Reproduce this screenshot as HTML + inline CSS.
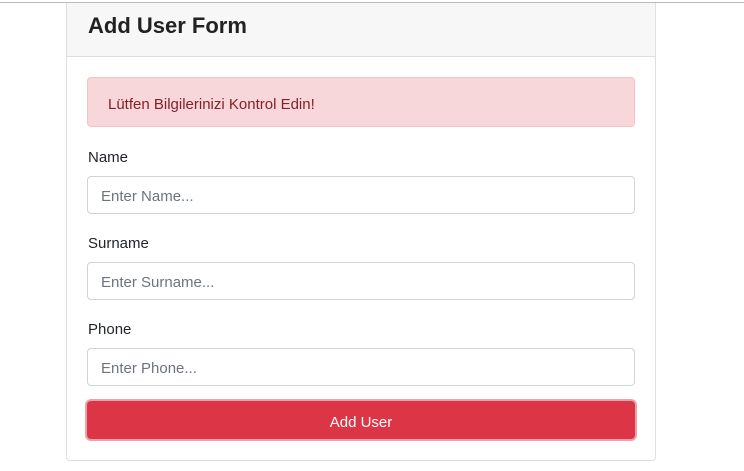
<!DOCTYPE html><html><head><style>
body{margin:0;width:744px;height:471px;background:#fff;font-family:"Liberation Sans",sans-serif;position:relative;overflow:hidden;color:#212529}
.top{position:absolute;left:0;top:2px;width:744px;height:1px;background:#bbb}
.card{position:absolute;left:66px;top:3px;width:588px;height:457px;border:1px solid #dfdfdf;border-top:none;border-radius:0 0 4px 4px}
.hd{height:53px;background:#f7f7f7;border-bottom:1px solid #dfdfdf;font-size:22px;font-weight:bold;line-height:46px;padding-left:21px;color:#222}
.a{position:absolute;left:20px;top:74px;background:#f8d7da;border:1px solid #f5c2c7;border-radius:4px;color:#842029;font-size:15px;line-height:53px;text-indent:20px;box-sizing:border-box;width:548px;height:50px}
.l{position:absolute;left:21px;font-size:15px}
.i{position:absolute;left:20px;width:548px;height:38px;border:1px solid #ced4da;border-radius:4px;box-sizing:border-box;font-size:15px;color:#6c757d;line-height:40px;padding-left:13px}
.b{position:absolute;left:20px;top:398px;width:548px;height:38px;background:#dc3545;border-radius:4px;box-shadow:0 0 0 2px #eea0a8;color:#fff;font-size:15px;text-align:center;line-height:43px}
</style></head><body><div class="top"></div><div class="card">
<div class="hd">Add User Form</div>
<div class="a">Lütfen Bilgilerinizi Kontrol Edin!</div>
<div class="l" style="top:146px">Name</div><div class="i" style="top:173px">Enter Name...</div>
<div class="l" style="top:232px">Surname</div><div class="i" style="top:259px">Enter Surname...</div>
<div class="l" style="top:318px">Phone</div><div class="i" style="top:345px">Enter Phone...</div>
<div class="b">Add User</div>
</div></body></html>
